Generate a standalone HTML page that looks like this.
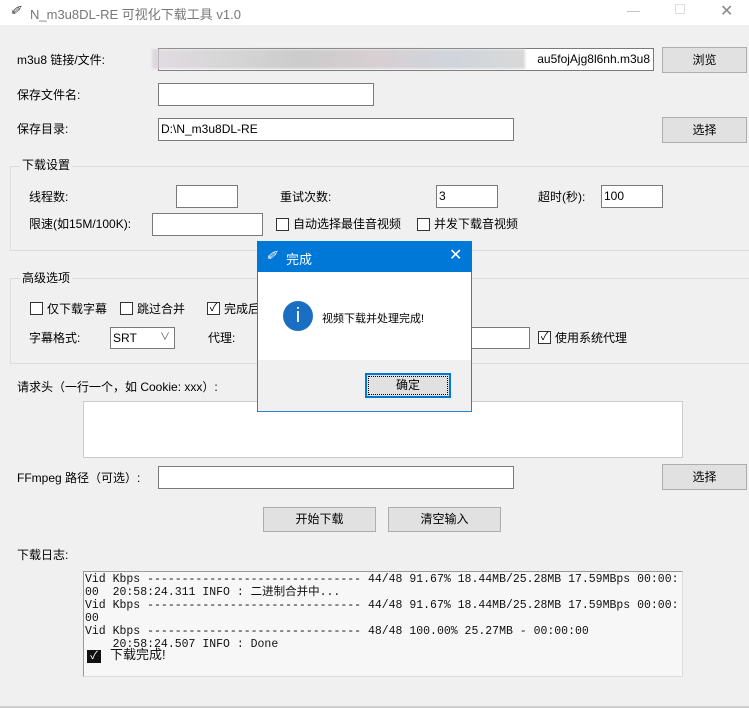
<!DOCTYPE html>
<html><head><meta charset="utf-8"><style>
*{margin:0;padding:0;box-sizing:border-box}
body{width:749px;height:708px;background:#f0f0f0;font-family:"Liberation Sans","Noto Sans CJK SC",sans-serif;font-size:12px;color:#000;position:relative;overflow:hidden}
.a{position:absolute;white-space:nowrap}
.e{position:absolute;background:#fff;border:1px solid #7a7a7a;padding-left:2px;line-height:20px;font-size:12px}
.b{position:absolute;background:#e1e1e1;border:1px solid #adadad;text-align:center;font-size:12px}
.cb{position:absolute;width:13px;height:13px;border:1px solid #333;background:#fff;font-size:11px;line-height:11px;text-align:center}
.fr{position:absolute;border:1px solid #dcdcdc}
.t{position:absolute;line-height:14px;white-space:nowrap}
</style></head><body>
<div class="a" style="left:0;top:0;width:749px;height:25px;background:#fff"></div>
<div class="a" style="left:10px;top:3px;font-size:13px;color:#333;font-style:italic">&#x2710;</div>
<div class="a" style="left:30px;top:4px;font-size:13px;color:#777">N_m3u8DL-RE 可视化下载工具 v1.0</div>
<div class="a" style="left:627px;top:3px;font-size:13px;color:#bbb">—</div>
<div class="a" style="left:675px;top:4px;width:10px;height:10px;border:1px solid #ddd"></div>
<div class="a" style="left:720px;top:1px;font-size:16px;color:#888">✕</div>

<div class="t" style="left:17px;top:53px">m3u8 链接/文件:</div>
<div class="e" style="left:158px;top:48px;width:496px;height:23px;text-align:right;padding-right:3px">au5fojAjg8l6nh.m3u8</div>
<div class="a" style="left:152px;top:49px;width:373px;height:20px;background:linear-gradient(90deg,#d8d0d8,#c9c9c9 20%,#bbb 40%,#cbbfc4 60%,#c0c8d0 80%,#ccc);opacity:.75;filter:blur(1px)"></div>
<div class="b" style="left:662px;top:47px;width:85px;height:26px;line-height:24px">浏览</div>

<div class="t" style="left:17px;top:88px">保存文件名:</div>
<div class="e" style="left:158px;top:83px;width:216px;height:23px"></div>
<div class="t" style="left:17px;top:122px">保存目录:</div>
<div class="e" style="left:158px;top:118px;width:356px;height:23px">D:\N_m3u8DL-RE</div>
<div class="b" style="left:662px;top:117px;width:85px;height:26px;line-height:24px">选择</div>

<div class="fr" style="left:10px;top:166px;width:745px;height:85px"></div>
<div class="t" style="left:20px;top:158px;background:#f0f0f0;padding:0 2px">下载设置</div>
<div class="t" style="left:29px;top:190px">线程数:</div>
<div class="e" style="left:176px;top:185px;width:62px;height:23px"></div>
<div class="t" style="left:280px;top:190px">重试次数:</div>
<div class="e" style="left:436px;top:185px;width:62px;height:23px">3</div>
<div class="t" style="left:538px;top:190px">超时(秒):</div>
<div class="e" style="left:601px;top:185px;width:62px;height:23px">100</div>
<div class="t" style="left:29px;top:217px">限速(如15M/100K):</div>
<div class="e" style="left:152px;top:213px;width:111px;height:23px"></div>
<div class="cb" style="left:276px;top:218px"></div><div class="t" style="left:293px;top:217px">自动选择最佳音视频</div>
<div class="cb" style="left:417px;top:218px"></div><div class="t" style="left:434px;top:217px">并发下载音视频</div>

<div class="fr" style="left:10px;top:278px;width:745px;height:86px"></div>
<div class="t" style="left:20px;top:271px;background:#f0f0f0;padding:0 2px">高级选项</div>
<div class="cb" style="left:30px;top:302px"></div><div class="t" style="left:47px;top:302px">仅下载字幕</div>
<div class="cb" style="left:120px;top:302px"></div><div class="t" style="left:137px;top:302px">跳过合并</div>
<div class="cb" style="left:207px;top:302px">✓</div><div class="t" style="left:224px;top:302px">完成后</div>
<div class="t" style="left:29px;top:331px">字幕格式:</div>
<div class="e" style="left:110px;top:327px;width:65px;height:22px">SRT<span style="position:absolute;right:4px;top:0;font-size:10px;color:#555">&#x2228;</span></div>
<div class="t" style="left:208px;top:331px">代理:</div>
<div class="e" style="left:440px;top:327px;width:90px;height:22px"></div>
<div class="cb" style="left:538px;top:331px">✓</div><div class="t" style="left:555px;top:331px">使用系统代理</div>

<div class="t" style="left:17px;top:380px">请求头（一行一个，如 Cookie: xxx）:</div>
<div class="a" style="left:83px;top:401px;width:600px;height:57px;background:#fff;border:1px solid #ccc"></div>

<div class="t" style="left:17px;top:471px">FFmpeg 路径（可选）:</div>
<div class="e" style="left:158px;top:466px;width:356px;height:23px"></div>
<div class="b" style="left:662px;top:464px;width:85px;height:26px;line-height:24px">选择</div>
<div class="b" style="left:263px;top:507px;width:113px;height:25px;line-height:23px">开始下载</div>
<div class="b" style="left:388px;top:507px;width:113px;height:25px;line-height:23px">清空输入</div>
<div class="t" style="left:17px;top:548px">下载日志:</div>
<div class="a" style="left:83px;top:571px;width:600px;height:106px;background:#f7f7f7;border:1px solid #9a9a9a;border-right-color:#ddd;border-bottom-color:#ddd"></div>
<pre style="position:absolute;white-space:pre;left:85px;top:573px;font-family:'Liberation Mono','Noto Sans CJK SC',monospace;font-size:11.5px;line-height:13px;color:#111">Vid Kbps ------------------------------- 44/48 91.67% 18.44MB/25.28MB 17.59MBps 00:00:
00  20:58:24.311 INFO : 二进制合并中...
Vid Kbps ------------------------------- 44/48 91.67% 18.44MB/25.28MB 17.59MBps 00:00:
00
Vid Kbps ------------------------------- 48/48 100.00% 25.27MB - 00:00:00
    20:58:24.507 INFO : Done</pre>
<div class="a" style="left:87px;top:650px;width:14px;height:13px;background:#111;color:#fff;font-size:11px;line-height:13px;text-align:center">✓</div>
<div class="a" style="left:110px;top:647px;font-size:13px;line-height:16px;color:#111">下载完成!</div>
<div class="a" style="left:0;top:706px;width:749px;height:2px;background:#cfcfcf"></div>

<div class="a" style="left:257px;top:241px;width:215px;height:171px;background:#f0f0f0;border:1px solid #2b7fd0"></div>
<div class="a" style="left:257px;top:241px;width:215px;height:31px;background:#0078d7"></div>
<div class="a" style="left:266px;top:248px;color:#fff;font-size:13px;font-style:italic">&#x2710;</div>
<div class="a" style="left:286px;top:249px;color:#fff;font-size:13px">完成</div>
<div class="a" style="left:449px;top:245px;color:#fff;font-size:16px">✕</div>
<div class="a" style="left:258px;top:272px;width:213px;height:88px;background:#fff"></div>
<div class="a" style="left:283px;top:301px;width:30px;height:30px;border-radius:50%;background:#1a6fc4;color:#fff;text-align:center;font-size:20px;line-height:30px;font-family:'Liberation Sans',sans-serif">i</div>
<div class="a" style="left:322px;top:310px;font-size:11px">视频下载并处理完成!</div>
<div class="a" style="left:365px;top:373px;width:86px;height:25px;background:#e1e1e1;border:2px solid #0078d7;text-align:center;line-height:21px;outline:1px dotted #000;outline-offset:-4px">确定</div>
</body></html>
